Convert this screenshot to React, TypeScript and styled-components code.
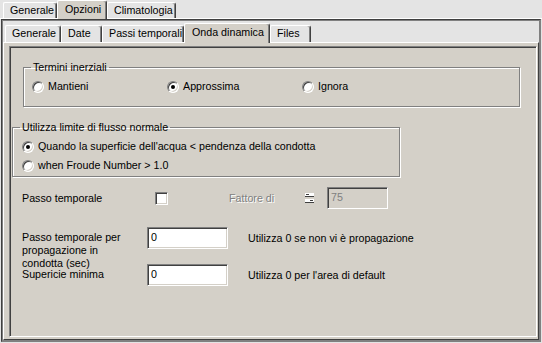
import React from "react";
import styled, { createGlobalStyle } from "styled-components";

const GlobalStyle = createGlobalStyle`
  html, body {
    margin: 0;
    padding: 0;
  }
  body {
    background: #e4e4e4;
    font-family: "Liberation Sans", Arial, sans-serif;
    font-size: 10.7px;
    line-height: 13px;
    color: #000;
  }
`;

const Window = styled.div`
  width: 542px;
  height: 343px;
  display: flex;
  flex-direction: column;
  overflow: hidden;
  background: #e4e4e4;
`;

const TabStrip = styled.div<{ $pad: number; $height: number }>`
  display: flex;
  align-items: flex-end;
  height: ${(p) => p.$height}px;
  padding-left: ${(p) => p.$pad}px;
  position: relative;
  z-index: 1;
  flex: none;
`;

const Tab = styled.div<{ $active?: boolean; $width: number; $tall: number }>`
  box-sizing: border-box;
  width: ${(p) => p.$width}px;
  height: ${(p) => (p.$active ? p.$tall + 3 : p.$tall)}px;
  margin-bottom: ${(p) => (p.$active ? -1 : 0)}px;
  padding: ${(p) => (p.$active ? 2 : 1)}px 0 0 ${(p) => (p.$active ? 7 : 6)}px;
  background: ${(p) => (p.$active ? "#d4d0c8" : "#e4e4e4")};
  border-top: 1px solid #fff;
  border-left: 1px solid #fff;
  border-right: 1px solid #404040;
  border-radius: 2px 3px 0 0;
  box-shadow: inset -1px 0 0 #808080;
  white-space: nowrap;
  overflow: hidden;
`;

const OuterPanel = styled.div`
  flex: 1;
  display: flex;
  flex-direction: column;
  border-top: 1px solid #fff;
  min-height: 0;
`;

const ClientEdge = styled.div`
  flex: 1;
  display: flex;
  flex-direction: column;
  margin: 0 1px 1px 1px;
  padding: 1px;
  border-top: 1px solid #404040;
  border-left: 1px solid #404040;
  border-right: 1px solid #808080;
  border-bottom: 1px solid #808080;
  box-shadow: inset 1px 1px 0 #808080, inset -1px -1px 0 #808080;
  min-height: 0;
`;

const InnerPanel = styled.div`
  flex: 1;
  display: flex;
  flex-direction: column;
  padding: 3px 1px 2px 5px;
  background: #d4d0c8;
  border-top: 1px solid #fff;
  border-left: 1px solid #fff;
  border-right: 1px solid #404040;
  border-bottom: 1px solid #404040;
  min-height: 0;
`;

const Sunken = styled.div`
  flex: 1;
  display: flex;
  flex-direction: column;
  padding: 1px;
  background: #d4d0c8;
  border-top: 1px solid #808080;
  border-left: 1px solid #808080;
  border-right: 1px solid #fff;
  border-bottom: 1px solid #fff;
  box-shadow: inset 1px 1px 0 #404040;
`;

const Group = styled.fieldset<{ $left: number; $width: number; $top: number }>`
  box-sizing: border-box;
  margin: ${(p) => p.$top}px 0 0 ${(p) => p.$left}px;
  width: ${(p) => p.$width}px;
  padding: 0;
  border: 1px solid #808080;
  box-shadow: inset 1px 1px 0 #fff, 1px 1px 0 #fff;
  min-inline-size: 0;
`;

const Legend = styled.legend`
  margin-left: 7px;
  padding: 0 2px;
  line-height: 13px;
`;

const RadioRow = styled.div`
  display: grid;
  grid-template-columns: 135px 135px 1fr;
  padding: 6px 0 13px 8px;
`;

const RadioList = styled.div`
  display: flex;
  flex-direction: column;
  gap: 6px;
  padding: 6px 0 4px 9px;
`;

const Option = styled.label`
  display: flex;
  align-items: center;
  gap: 4px;
  height: 13px;
`;

const RadioDot = styled.span<{ $checked?: boolean }>`
  box-sizing: border-box;
  flex: none;
  position: relative;
  width: 12px;
  height: 12px;
  border-radius: 50%;
  border: 1px solid;
  border-color: #808080 #fff #fff #808080;
  background: #fff;
  box-shadow: inset 1px 1px 0 #404040, inset -1px -1px 0 #d4d0c8;

  &::after {
    content: "";
    display: ${(p) => (p.$checked ? "block" : "none")};
    position: absolute;
    left: 3px;
    top: 3px;
    width: 4px;
    height: 4px;
    border-radius: 50%;
    background: #000;
  }
`;

const Row = styled.div<{ $top: number; $height: number }>`
  display: flex;
  align-items: flex-start;
  height: ${(p) => p.$height}px;
  margin-top: ${(p) => p.$top}px;
  padding-left: 11px;
`;

const Label = styled.div<{ $width: number; $offset: number; $muted?: boolean }>`
  flex: none;
  width: ${(p) => p.$width}px;
  margin-top: ${(p) => p.$offset}px;
  color: ${(p) => (p.$muted ? "#808080" : "#000")};
  text-shadow: ${(p) => (p.$muted ? "1px 1px 0 #fff" : "none")};
`;

const CheckBox = styled.span`
  box-sizing: border-box;
  flex: none;
  width: 13px;
  height: 13px;
  margin: 5px 61px 0 0;
  border: 1px solid;
  border-color: #808080 #fff #fff #808080;
  background: #fff;
  box-shadow: inset 1px 1px 0 #404040, inset -1px -1px 0 #d4d0c8;
`;

const SpinIcon = styled.svg`
  flex: none;
  margin: 5px 13px 0 0;
`;

const TextBox = styled.div<{ $width: number; $disabled?: boolean }>`
  box-sizing: border-box;
  flex: none;
  width: ${(p) => p.$width}px;
  height: 22px;
  padding: 3px 0 0 3px;
  border: 1px solid;
  border-color: #808080 #fff #fff #808080;
  background: ${(p) => (p.$disabled ? "#d4d0c8" : "#fff")};
  color: ${(p) => (p.$disabled ? "#808080" : "#000")};
  box-shadow: inset 1px 1px 0 #404040, inset -1px -1px 0 #d4d0c8;
`;

const Hint = styled.div`
  margin: 5px 0 0 20px;
  white-space: nowrap;
`;

const outerTabs = [
  { name: "Generale", width: 54 },
  { name: "Opzioni", width: 50, active: true },
  { name: "Climatologia", width: 69 },
];

const innerTabs = [
  { name: "Generale", width: 56 },
  { name: "Date", width: 41 },
  { name: "Passi temporali", width: 82 },
  { name: "Onda dinamica", width: 86, active: true },
  { name: "Files", width: 41 },
];

export default function App() {
  return (
    <>
      <GlobalStyle />
      <Window>
        <TabStrip $pad={3} $height={18}>
          {outerTabs.map((t) => (
            <Tab key={t.name} $width={t.width} $active={t.active} $tall={16}>
              {t.name}
            </Tab>
          ))}
        </TabStrip>
        <OuterPanel>
          <ClientEdge>
            <TabStrip $pad={2} $height={21}>
              {innerTabs.map((t) => (
                <Tab key={t.name} $width={t.width} $active={t.active} $tall={17}>
                  {t.name}
                </Tab>
              ))}
            </TabStrip>
            <InnerPanel>
              <Sunken>
                <Group $left={12} $width={497} $top={13}>
                  <Legend>Termini inerziali</Legend>
                  <RadioRow>
                    <Option>
                      <RadioDot />
                      Mantieni
                    </Option>
                    <Option>
                      <RadioDot $checked />
                      Approssima
                    </Option>
                    <Option>
                      <RadioDot />
                      Ignora
                    </Option>
                  </RadioRow>
                </Group>

                <Group $left={1} $width={388} $top={14}>
                  <Legend>Utilizza limite di flusso normale</Legend>
                  <RadioList>
                    <Option>
                      <RadioDot $checked />
                      Quando la superficie dell'acqua &lt; pendenza della condotta
                    </Option>
                    <Option>
                      <RadioDot />
                      when Froude Number &gt; 1.0
                    </Option>
                  </RadioList>
                </Group>

                <Row $top={10} $height={22}>
                  <Label $width={133} $offset={5}>
                    Passo temporale
                  </Label>
                  <CheckBox />
                  <Label $width={76} $offset={5} $muted>
                    Fattore di
                  </Label>
                  <SpinIcon width="9" height="12" viewBox="0 0 9 12">
                    <rect x="0" y="1" width="9" height="4" fill="#fff" />
                    <rect x="0" y="4" width="9" height="1" fill="#404040" />
                    <rect x="1" y="2" width="3" height="1" fill="#404040" />
                    <rect x="0" y="7" width="9" height="4" fill="#fff" />
                    <rect x="0" y="10" width="9" height="1" fill="#404040" />
                    <rect x="5" y="8" width="3" height="1" fill="#404040" />
                  </SpinIcon>
                  <TextBox $width={61} $disabled>
                    75
                  </TextBox>
                </Row>

                <Row $top={18} $height={37}>
                  <Label $width={125} $offset={4}>
                    Passo temporale per
                    <br />
                    propagazione in
                    <br />
                    condotta (sec)
                  </Label>
                  <TextBox $width={81}>0</TextBox>
                  <Hint>Utilizza 0 se non vi è propagazione</Hint>
                </Row>

                <Row $top={0} $height={22}>
                  <Label $width={125} $offset={4}>
                    Supericie minima
                  </Label>
                  <TextBox $width={81}>0</TextBox>
                  <Hint>Utilizza 0 per l'area di default</Hint>
                </Row>
              </Sunken>
            </InnerPanel>
          </ClientEdge>
        </OuterPanel>
      </Window>
    </>
  );
}
